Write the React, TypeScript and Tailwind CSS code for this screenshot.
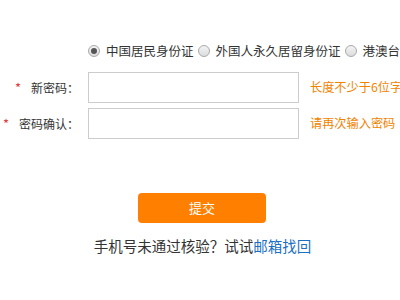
function Radio({ checked }: { checked?: boolean }) {
  return (
    <span className="flex h-[12px] w-[12px] items-center justify-center rounded-full border border-[#a9a9a9] bg-gradient-to-b from-[#f4f4f4] to-[#dcdcdc]">
      {checked && <span className="h-[6px] w-[6px] rounded-full bg-[#555]" />}
    </span>
  );
}

function Row({ label, hint }: { label: string; hint: string }) {
  return (
    <div className="flex h-[31px] items-center">
      <div className="flex w-[79px] shrink-0 items-center justify-end text-[12px] text-[#333]">
        <span className="mr-[10px] text-[13px] text-[#e4393c]">*</span>
        {label}
      </div>
      <input
        type="password"
        className="ml-[9px] h-[31px] w-[211px] shrink-0 border border-[#cccccc] bg-white outline-none"
      />
      <span className="ml-[11px] shrink-0 whitespace-nowrap text-[12.2px] text-[#f08300]">
        {hint}
      </span>
    </div>
  );
}

export default function App() {
  return (
    <div
      className="h-[300px] w-[400px] overflow-hidden bg-white"
      style={{ fontFamily: '"Noto Sans CJK SC", "Noto Sans", sans-serif' }}
    >
      <div className="box-content flex h-[18px] items-center whitespace-nowrap pl-[88px] pt-[42px] text-[12.5px] text-[#333]">
        <label className="flex shrink-0 items-center">
          <Radio checked />
          <span className="ml-[6px]">中国居民身份证</span>
        </label>
        <label className="ml-[4px] flex shrink-0 items-center">
          <Radio />
          <span className="ml-[6px]">外国人永久居留身份证</span>
        </label>
        <label className="ml-[4px] flex shrink-0 items-center">
          <Radio />
          <span className="ml-[6px]">港澳台居民居住证</span>
        </label>
      </div>

      <div className="mt-[12px] flex flex-col gap-[5px]">
        <Row label="新密码：" hint="长度不少于6位字符" />
        <Row label="密码确认：" hint="请再次输入密码" />
      </div>

      <button className="ml-[138px] mt-[54px] flex h-[30px] w-[128px] items-center justify-center rounded-[4px] bg-[#ff8000] text-[13px] text-white">
        提交
      </button>

      <p className="mt-[12px] w-[405px] text-center text-[14.5px] text-[#333]">
        手机号未通过核验？试试<a className="text-[#1a6fc4]">邮箱找回</a>
      </p>
    </div>
  );
}
